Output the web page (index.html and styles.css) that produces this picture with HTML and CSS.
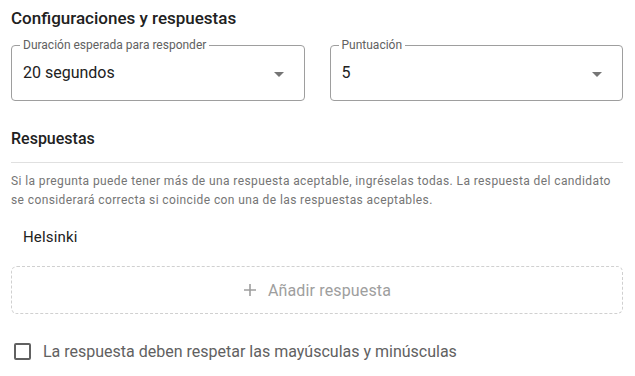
FILE: index.html
```html
<!DOCTYPE html>
<html lang="es">
<head>
    <meta charset="UTF-8">
    <meta name="viewport" content="width=device-width, initial-scale=1.0">
    <title>Configuraciones y respuestas</title>
    <link rel="stylesheet" href="styles.css">
</head>
<body>
    <div class="panel">
        <h2 class="panel-title">Configuraciones y respuestas</h2>

        <div class="select-row">
            <div class="select-field">
                <span class="select-label">Duración esperada para responder</span>
                <span class="select-value">20 segundos</span>
                <span class="select-arrow"></span>
            </div>
            <div class="select-field">
                <span class="select-label">Puntuación</span>
                <span class="select-value">5</span>
                <span class="select-arrow"></span>
            </div>
        </div>

        <h3 class="section-title">Respuestas</h3>
        <p class="section-help">Si la pregunta puede tener más de una respuesta aceptable, ingréselas todas. La respuesta del candidato se considerará correcta si coincide con una de las respuestas aceptables.</p>

        <div class="answer-item">Helsinki</div>

        <button class="add-answer" type="button">
            <svg width="14" height="14" viewBox="0 0 14 14"><path d="M7 1v12M1 7h12" stroke="#9e9e9e" stroke-width="1.6" fill="none"/></svg>
            <span>Añadir respuesta</span>
        </button>

        <label class="check-row">
            <span class="check-box"></span>
            <span class="check-label">La respuesta deben respetar las mayúsculas y minúsculas</span>
        </label>
    </div>
</body>
</html>
```

FILE: styles.css
```css
* {
    margin: 0;
    padding: 0;
    box-sizing: border-box;
}

body {
    background: #ffffff;
    font-family: Roboto, 'Noto Sans', sans-serif;
    color: #212121;
}

.panel {
    padding: 6px 12px 0 11px;
    display: flex;
    flex-direction: column;
}

.panel-title {
    font-size: 17px;
    font-weight: 500;
    line-height: 24px;
    color: #212121;
}

.select-row {
    display: flex;
    gap: 25px;
    margin-top: 15px;
}

.select-field {
    position: relative;
    flex: 1;
    height: 56px;
    border: 1px solid #9e9e9e;
    border-radius: 4px;
    display: flex;
    align-items: center;
    padding: 0 12px 0 11px;
}

.select-label {
    position: absolute;
    top: -8px;
    left: 8px;
    padding: 0 3px;
    background: #ffffff;
    font-size: 12px;
    line-height: 14px;
    color: #616161;
}

.select-value {
    flex: 1;
    font-size: 16px;
    color: #212121;
    margin-top: -2px;
}

.select-arrow {
    width: 0;
    height: 0;
    border-left: 5px solid transparent;
    border-right: 5px solid transparent;
    border-top: 5px solid #757575;
    margin-right: 8px;
    margin-top: 2px;
}

.section-title {
    margin-top: 28px;
    font-size: 16px;
    font-weight: 500;
    line-height: 20px;
    color: #212121;
    padding-bottom: 13px;
    border-bottom: 1px solid #e0e0e0;
}

.section-help {
    margin-top: 9px;
    font-size: 12px;
    line-height: 19px;
    letter-spacing: 0.4px;
    color: #757575;
}

.answer-item {
    margin-top: 17px;
    padding-left: 12px;
    font-size: 15px;
    line-height: 20px;
    letter-spacing: 0.15px;
    color: #212121;
}

.add-answer {
    margin-top: 19px;
    height: 48px;
    border: 1.5px dashed #d0d0d0;
    border-radius: 6px;
    background: #ffffff;
    display: flex;
    align-items: center;
    justify-content: center;
    gap: 11px;
    font-family: Roboto, 'Noto Sans', sans-serif;
    font-size: 16px;
    letter-spacing: 0.15px;
    color: #9e9e9e;
}

.check-row {
    margin-top: 28px;
    display: flex;
    align-items: center;
    gap: 12px;
    padding-left: 3px;
}

.check-box {
    width: 17px;
    height: 17px;
    border: 2px solid #616161;
    border-radius: 2px;
}

.check-label {
    font-size: 16px;
    color: #616161;
}
```
